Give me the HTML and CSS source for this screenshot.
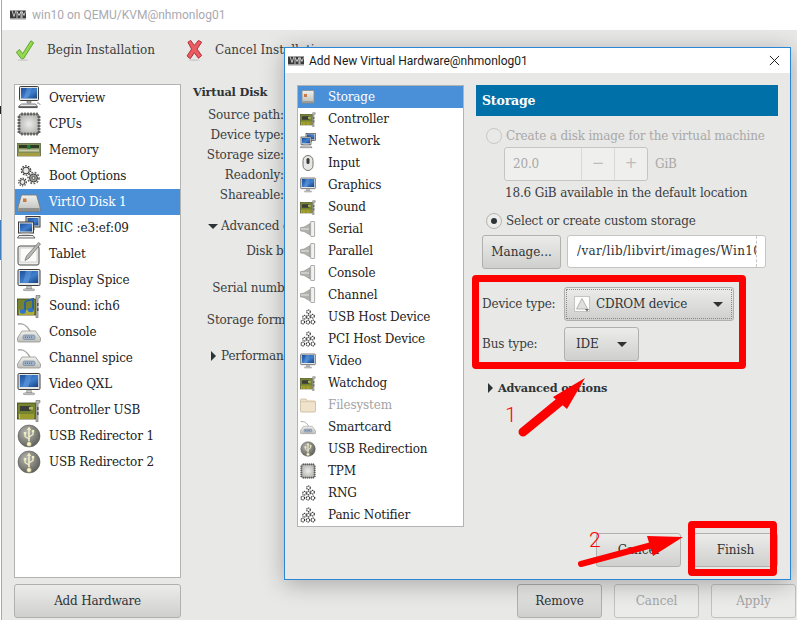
FILE: index.html
```html
<!DOCTYPE html>
<html lang="en">
<head>
<meta charset="utf-8">
<title>win10 on QEMU/KVM@nhmonlog01</title>
<link rel="stylesheet" href="styles.css">
</head>
<body>
<svg class="defs" width="0" height="0" aria-hidden="true">
  <defs>
    <linearGradient id="gScreen" x1="0" y1="0" x2="1" y2="1"><stop offset="0" stop-color="#1d4f9c"/><stop offset=".55" stop-color="#3f7fcf"/><stop offset="1" stop-color="#16427f"/></linearGradient>
    <linearGradient id="gDisk" x1="0" y1="0" x2="0" y2="1"><stop offset="0" stop-color="#f0f0ee"/><stop offset="1" stop-color="#bdbdb9"/></linearGradient>
    <radialGradient id="gBall" cx=".4" cy=".35" r=".75"><stop offset="0" stop-color="#b9b9b5"/><stop offset="1" stop-color="#55554f"/></radialGradient>
    <radialGradient id="gChip" cx=".5" cy=".5" r=".7"><stop offset="0" stop-color="#ececea"/><stop offset="1" stop-color="#a5a5a2"/></radialGradient>
    <symbol id="i-monitor" viewBox="0 0 24 24">
      <rect x="1" y="1.500" width="22" height="16" rx="1.200" fill="#e6e6e4" stroke="#3c3c3c"/>
      <rect x="2.800" y="3" width="18.400" height="12" fill="url(#gScreen)"/>
      <path d="M9 3h6l-4 12H6z" fill="#6fa3e0" opacity=".45"/>
      <path d="M10 18h4l.8 3h-5.600z" fill="#c9c9c6" stroke="#777" stroke-width=".5"/>
      <rect x="6.500" y="21" width="11" height="1.600" rx=".6" fill="#d8d8d5" stroke="#666" stroke-width=".5"/>
    </symbol>
    <symbol id="i-overview" viewBox="0 0 24 24">
      <rect x="2.500" y="0.500" width="19" height="14" rx="1" fill="#e6e6e4" stroke="#3c3c3c"/>
      <rect x="4" y="2" width="16" height="10.500" fill="url(#gScreen)"/>
      <path d="M10 2h5l-4 10.500H6.500z" fill="#6fa3e0" opacity=".45"/>
      <path d="M10 15h4v2h-4z" fill="#bbb" stroke="#555" stroke-width=".5"/>
      <path d="M4.500 18h14l2 2.500H1.500z" fill="#e9e9e7" stroke="#444" stroke-width=".7"/>
      <path d="M1.500 21.500h19" stroke="#555" stroke-width="1.200"/>
      <path d="M20 17c2.500 0 3 1 3 2" stroke="#888" fill="none"/>
    </symbol>
    <symbol id="i-chip" viewBox="0 0 24 24">
      <rect x="2" y="2" width="20" height="20" rx="2" fill="url(#gChip)" stroke="#6a6a68"/>
      <path d="M5 .5v3M8 .5v3M11 .5v3M14 .5v3M17 .5v3M20 .5v3M5 20.500v3M8 20.500v3M11 20.500v3M14 20.500v3M17 20.500v3M20 20.500v3M.5 5h3M.5 8h3M.5 11h3M.5 14h3M.5 17h3M.5 20h3M20.500 5h3M20.500 8h3M20.500 11h3M20.500 14h3M20.500 17h3M20.500 20h3" stroke="#4a4a48" stroke-width="1.300"/>
    </symbol>
    <symbol id="i-memory" viewBox="0 0 24 24">
      <rect x="0.500" y="5.500" width="23" height="12.500" fill="#7f8f55" stroke="#4e5a34" stroke-width=".7"/>
      <rect x="2" y="7" width="20" height="3" fill="#2f3a24"/>
      <rect x="10" y="7" width="3.500" height="4" fill="#1f7f3a"/>
      <rect x="2" y="11.500" width="20" height="2" fill="#c9ccb0"/>
      <path d="M1.500 15h21v3h-21z" fill="#c6b94e"/>
      <path d="M3 15v3M5 15v3M7 15v3M9 15v3M11 15v3M13 15v3M15 15v3M17 15v3M19 15v3M21 15v3" stroke="#6c6a2a" stroke-width=".7"/>
    </symbol>
    <symbol id="i-gears" viewBox="0 0 24 24">
      <g fill="none" stroke="#3f3f3d">
        <circle cx="9" cy="6.500" r="3.200" stroke-width="1.100" fill="#e9e9e7"/>
        <circle cx="9" cy="6.500" r="4.700" stroke-width="1.300" stroke-dasharray="1.600 1.350"/>
        <circle cx="5.500" cy="18" r="2.500" stroke-width="1" fill="#e9e9e7"/>
        <circle cx="5.500" cy="18" r="3.800" stroke-width="1.200" stroke-dasharray="1.400 1.100"/>
        <circle cx="16.500" cy="14" r="4" stroke-width="1" fill="#9d9d9a"/>
        <circle cx="16.500" cy="14" r="5.500" stroke-width="1.700" stroke-dasharray="1.800 1.500" stroke="#666"/>
        <circle cx="16.500" cy="14" r="1.500" fill="#e9e9e7" stroke-width=".8"/>
      </g>
    </symbol>
    <symbol id="i-disk" viewBox="0 0 24 24">
      <path d="M4.500 5h15l3.500 12v3.500a1 1 0 0 1-1 1H2a1 1 0 0 1-1-1V17z" fill="url(#gDisk)" stroke="#77766f" stroke-width=".8"/>
      <rect x="1.500" y="18" width="21" height="3" fill="#8f8f8b"/>
      <rect x="6" y="8.500" width="3.500" height="3.500" fill="#c77a43"/>
    </symbol>
    <symbol id="i-storage" viewBox="0 0 16 16">
      <rect x="2" y="1.500" width="12" height="12.500" rx="1" fill="url(#gDisk)" stroke="#8a8a86" stroke-width=".8"/>
      <rect x="2.400" y="12" width="11.200" height="2" fill="#9a9a96"/>
      <rect x="4" y="5" width="3" height="3" fill="#c77a43"/>
    </symbol>
    <symbol id="i-nic" viewBox="0 0 24 24">
      <rect x="9" y="0.500" width="14" height="10.500" fill="#d9d9d6" stroke="#3c3c3c"/>
      <rect x="10.500" y="2" width="11" height="7.500" fill="url(#gScreen)"/>
      <path d="M13 11v2h5" stroke="#555" fill="none"/>
      <rect x="1.500" y="6" width="15" height="11" fill="#e2e2df" stroke="#3c3c3c"/>
      <rect x="3" y="7.500" width="12" height="8" fill="url(#gScreen)"/>
      <path d="M5 17h8v1.500H5z" fill="#bbb"/>
      <path d="M2 19.500h14l2 2.500H0.500z" fill="#eee" stroke="#444" stroke-width=".8"/>
    </symbol>
    <symbol id="i-tablet" viewBox="0 0 24 24">
      <rect x="1" y="4" width="21" height="19" rx="2" fill="#efefed" stroke="#4d4d4b"/>
      <rect x="3" y="6" width="17" height="14" fill="#fafaf9" stroke="#bbb" stroke-width=".6"/>
      <path d="M21.500.5 23.500 2 12 16l-4 2.500L9.500 14z" fill="#b9b9b6" stroke="#666" stroke-width=".7"/>
    </symbol>
    <symbol id="i-card" viewBox="0 0 24 24">
      <rect x="0.500" y="5" width="18" height="16" fill="#77842f" stroke="#3f4718" stroke-width=".8"/>
      <rect x="3" y="8" width="10.500" height="5" rx=".6" fill="#3b3d3a"/>
      <rect x="12" y="9" width="4" height="2.500" fill="#b4bc63"/>
      <path d="M2 16h15v5H2z" fill="#c9c23a"/>
      <path d="M4 16v5M6 16v5M8 16v5M10 16v5M12 16v5M14 16v5M16 16v5" stroke="#58611f" stroke-width=".8"/>
      <path d="M19 2.500h4v2l-2 1V24h-2z" fill="#b9b9b5" stroke="#666" stroke-width=".6"/>
      <rect x="20" y="9" width="1.500" height="3" fill="#555"/><rect x="20" y="14" width="1.500" height="3" fill="#555"/>
    </symbol>
    <symbol id="i-sound" viewBox="0 0 24 24">
      <rect x="0.500" y="5" width="18" height="16" fill="#77842f" stroke="#3f4718" stroke-width=".8"/>
      <path d="M2 16h15v5H2z" fill="#c9c23a" opacity=".7"/>
      <path d="M8 7.500 16 5v11" stroke="#1e5fb5" stroke-width="1.800" fill="none"/>
      <path d="M8 7.500V17" stroke="#1e5fb5" stroke-width="1.800"/>
      <ellipse cx="5.800" cy="17.500" rx="3" ry="2.200" fill="#2f74c8"/>
      <ellipse cx="13.800" cy="16" rx="3" ry="2.200" fill="#2f74c8"/>
      <path d="M19 1.500h4v2l-2 1V24h-2z" fill="#b9b9b5" stroke="#666" stroke-width=".6"/>
      <rect x="20" y="9" width="1.500" height="3" fill="#555"/><rect x="20" y="14" width="1.500" height="3" fill="#555"/>
    </symbol>
    <symbol id="i-console" viewBox="0 0 24 24">
      <path d="M1 4c6-1 9 2 12 7" fill="none" stroke="#a9a9a6" stroke-width="1.500"/>
      <path d="M5 11h13.500l5 7v2.500a1.500 1.500 0 0 1-1.500 1.500H2a1.500 1.500 0 0 1-1.500-1.500V18z" fill="url(#gDisk)" stroke="#96968f" stroke-width=".8"/>
      <rect x="6" y="15" width="12" height="4.500" rx="1.500" fill="#9db0c4" stroke="#6f7f90" stroke-width=".6"/>
      <path d="M8 17.200h8" stroke="#56616e" stroke-width="1" stroke-dasharray="1 1"/>
    </symbol>
    <symbol id="i-usb" viewBox="0 0 24 24">
      <circle cx="12" cy="12" r="11" fill="url(#gBall)" stroke="#5a5a56" stroke-width=".6"/>
      <path d="M12 2.500 9.800 6h1.400v12h1.600V6h1.400z" fill="#f1eec4"/>
      <path d="M12 15 8 12.500V10M12 13l4-2.500V8" stroke="#f1eec4" stroke-width="1.300" fill="none"/>
      <rect x="6.800" y="8" width="2.400" height="2.400" fill="#f1eec4"/>
      <rect x="14.800" y="6" width="2.400" height="2.400" fill="#f1eec4"/>
      <circle cx="12" cy="20" r="2.500" fill="#f6f3c9" stroke="#6a6a56" stroke-width=".6"/>
    </symbol>
    <symbol id="i-cone" viewBox="0 0 16 16">
      <path d="M.5 6.500 4 6l6-3.500v11.500L4 10.500.5 10z" fill="#b0b0ac" stroke="#85857f" stroke-width=".5"/>
      <rect x="10.600" y="0.500" width="4" height="15" rx=".5" fill="#f1f1ef" stroke="#8d8d89" stroke-width=".7"/>
      <path d="M1 8h8" stroke="#e6e6e4"/>
    </symbol>
    <symbol id="i-mouse" viewBox="0 0 16 16">
      <rect x="3" y="0.500" width="10" height="15" rx="5" fill="#e7e7e5" stroke="#77776f"/>
      <rect x="6.500" y="3" width="3" height="6" rx="1.500" fill="#3a3a38"/>
    </symbol>
    <symbol id="i-folder" viewBox="0 0 16 16">
      <path d="M.5 3a1 1 0 0 1 1-1H6l1.500 2h7a1 1 0 0 1 1 1v9a1 1 0 0 1-1 1h-13a1 1 0 0 1-1-1z" fill="#efe3cc" stroke="#c8b99b" stroke-width=".8"/>
      <path d="M1 4.700h14" stroke="#d9c9a9"/>
    </symbol>
    <symbol id="i-hostgear" viewBox="0 0 16 16">
      <g fill="#fff" stroke="#333" stroke-width="1.200">
        <circle cx="8.500" cy="2.800" r="1.800" stroke-dasharray="1.200 .6"/>
        <circle cx="12.500" cy="7.200" r="1.800" stroke-dasharray="1.200 .6"/>
        <circle cx="4.500" cy="8.200" r="1.800" stroke-dasharray="1.200 .6"/>
        <circle cx="8.500" cy="8" r="1.800" stroke-dasharray="1.200 .6"/>
        <circle cx="2.800" cy="13" r="1.800" stroke-dasharray="1.200 .6"/>
        <circle cx="8" cy="13.200" r="1.800" stroke-dasharray="1.200 .6"/>
        <circle cx="13" cy="13" r="1.800" stroke-dasharray="1.200 .6"/>
      </g>
    </symbol>
    <symbol id="i-vmm" viewBox="0 0 16 9">
      <path d="M0 0h16v8H0z" fill="#3a3a3a"/>
      <path d="M2 0 4 6 6 0M7 8V1l2 4 2-4v7M12 8V1l2 4 1.500-4" fill="none" stroke="#e8e8e8" stroke-width=".8"/>
      <path d="M0 8h16v1H0z" fill="#9a9a9a"/>
    </symbol>
  </defs>
</svg>

<span class="edge-mark edge-mark-black"></span>
<span class="edge-mark edge-mark-blue"></span>

<main class="window">
  <header class="titlebar">
    <svg class="title-logo"><use href="#i-vmm"/></svg>
    <span class="title-text">win10 on QEMU/KVM@nhmonlog01</span>
  </header>

  <div class="toolbar">
    <div class="tool tool-begin">
      <svg class="tool-icon" viewBox="0 0 22 24">
        <path d="M2 14.500 5.500 11.500 9 16 18 2 21 4 10 21.500H7.500z" fill="#93d94d" stroke="#5d9c2c" stroke-linejoin="round"/>
        <ellipse cx="9" cy="23" rx="6" ry="1" fill="#ccc"/>
      </svg>
      <span>Begin Installation</span>
    </div>
    <div class="tool">
      <svg class="tool-icon" viewBox="-2 0 22 24">
        <path d="M4 3.500 7 1.500 11 7 15.500 1.500 19 3.500 14 11 19 18 15.500 21 11 15 6.500 21.500 3 18.500 8 11z" fill="#ea5b62" stroke="#a92a30" stroke-linejoin="round"/>
        <ellipse cx="11" cy="23" rx="6" ry="1" fill="#ccc"/>
      </svg>
      <span>Cancel Installation</span>
    </div>
  </div>

  <div class="content">
    <ul class="list list-main">
      <li class="row"><svg class="icon"><use href="#i-overview"/></svg>Overview</li>
      <li class="row"><svg class="icon"><use href="#i-chip"/></svg>CPUs</li>
      <li class="row"><svg class="icon"><use href="#i-memory"/></svg>Memory</li>
      <li class="row"><svg class="icon"><use href="#i-gears"/></svg>Boot Options</li>
      <li class="row row-selected"><svg class="icon"><use href="#i-disk"/></svg>VirtIO Disk 1</li>
      <li class="row"><svg class="icon"><use href="#i-nic"/></svg>NIC :e3:ef:09</li>
      <li class="row"><svg class="icon"><use href="#i-tablet"/></svg>Tablet</li>
      <li class="row"><svg class="icon"><use href="#i-monitor"/></svg>Display Spice</li>
      <li class="row"><svg class="icon"><use href="#i-sound"/></svg>Sound: ich6</li>
      <li class="row"><svg class="icon"><use href="#i-console"/></svg>Console</li>
      <li class="row"><svg class="icon"><use href="#i-console"/></svg>Channel spice</li>
      <li class="row"><svg class="icon"><use href="#i-monitor"/></svg>Video QXL</li>
      <li class="row"><svg class="icon"><use href="#i-card"/></svg>Controller USB</li>
      <li class="row"><svg class="icon"><use href="#i-usb"/></svg>USB Redirector 1</li>
      <li class="row"><svg class="icon"><use href="#i-usb"/></svg>USB Redirector 2</li>
    </ul>

    <section class="details">
      <h2 class="details-title">Virtual Disk</h2>
      <div class="props">
        <div class="prop">Source path:</div>
        <div class="prop">Device type:</div>
        <div class="prop">Storage size:</div>
        <div class="prop">Readonly:</div>
        <div class="prop">Shareable:</div>
      </div>
      <div class="expander expander-open"><span class="tri-down"></span>Advanced options</div>
      <div class="adv adv-bus">Disk bus:</div>
      <div class="adv adv-serial">Serial number:</div>
      <div class="adv adv-format">Storage format:</div>
      <div class="expander expander-perf"><span class="tri-right"></span>Performance options</div>
    </section>
  </div>

  <footer class="bottom">
    <button class="btn btn-add">Add Hardware</button>
    <div class="bottom-actions">
      <button class="btn btn-85">Remove</button>
      <button class="btn btn-85 btn-disabled">Cancel</button>
      <button class="btn btn-85 btn-disabled">Apply</button>
    </div>
  </footer>
</main>

<div class="dialog">
  <header class="dialog-title">
    <svg class="title-logo"><use href="#i-vmm"/></svg>
    <span class="dialog-title-text">Add New Virtual Hardware@nhmonlog01</span>
    <svg class="close" viewBox="0 0 12 12"><path d="M1 1l10 10M11 1 1 11" stroke="#111" fill="none"/></svg>
  </header>
  <div class="dialog-body">
    <div class="dialog-main">
      <ul class="list list-dialog">
        <li class="row-s row-selected"><svg class="icon-s"><use href="#i-storage"/></svg>Storage</li>
        <li class="row-s"><svg class="icon-s"><use href="#i-card"/></svg>Controller</li>
        <li class="row-s"><svg class="icon-s"><use href="#i-nic"/></svg>Network</li>
        <li class="row-s"><svg class="icon-s"><use href="#i-mouse"/></svg>Input</li>
        <li class="row-s"><svg class="icon-s"><use href="#i-monitor"/></svg>Graphics</li>
        <li class="row-s"><svg class="icon-s"><use href="#i-card"/></svg>Sound</li>
        <li class="row-s"><svg class="icon-s"><use href="#i-cone"/></svg>Serial</li>
        <li class="row-s"><svg class="icon-s"><use href="#i-cone"/></svg>Parallel</li>
        <li class="row-s"><svg class="icon-s"><use href="#i-cone"/></svg>Console</li>
        <li class="row-s"><svg class="icon-s"><use href="#i-cone"/></svg>Channel</li>
        <li class="row-s"><svg class="icon-s"><use href="#i-hostgear"/></svg>USB Host Device</li>
        <li class="row-s"><svg class="icon-s"><use href="#i-hostgear"/></svg>PCI Host Device</li>
        <li class="row-s"><svg class="icon-s"><use href="#i-monitor"/></svg>Video</li>
        <li class="row-s"><svg class="icon-s"><use href="#i-card"/></svg>Watchdog</li>
        <li class="row-s row-muted"><svg class="icon-s"><use href="#i-folder"/></svg>Filesystem</li>
        <li class="row-s"><svg class="icon-s"><use href="#i-console"/></svg>Smartcard</li>
        <li class="row-s"><svg class="icon-s"><use href="#i-usb"/></svg>USB Redirection</li>
        <li class="row-s"><svg class="icon-s"><use href="#i-chip"/></svg>TPM</li>
        <li class="row-s"><svg class="icon-s"><use href="#i-hostgear"/></svg>RNG</li>
        <li class="row-s"><svg class="icon-s"><use href="#i-hostgear"/></svg>Panic Notifier</li>
      </ul>

      <section class="form">
        <h2 class="form-header">Storage</h2>
        <label class="radio-row radio-row-disabled"><span class="radio radio-off"></span>Create a disk image for the virtual machine</label>
        <div class="size-row">
          <div class="spin">
            <span class="spin-value">20.0</span>
            <span class="spin-btn">&minus;</span>
            <span class="spin-btn">+</span>
          </div>
          <span class="size-unit">GiB</span>
        </div>
        <div class="size-info">18.6 GiB available in the default location</div>
        <label class="radio-row radio-row-second"><span class="radio radio-on"></span>Select or create custom storage</label>
        <div class="path-row">
          <button class="btn btn-manage">Manage...</button>
          <div class="path-entry"><span class="path-text">/var/lib/libvirt/images/Win10.iso</span></div>
        </div>
        <div class="field field-device">
          <span class="field-label">Device type:</span>
          <div class="combo combo-device">
            <svg class="combo-icon" viewBox="0 0 16 16">
              <rect x="0.500" y="0.500" width="15" height="15" fill="#fdfdfc" stroke="#c4c4c0"/>
              <path d="M8 2.500 13.500 13h-11z" fill="#dfdfdc" stroke="#b5b5b0"/>
              <path d="M11 13h4l-2 2.500z" fill="#666"/>
            </svg>
            <span class="combo-text">CDROM device</span>
            <span class="caret"></span>
          </div>
        </div>
        <div class="field">
          <span class="field-label">Bus type:</span>
          <div class="combo combo-bus">
            <span class="combo-text">IDE</span>
            <span class="caret"></span>
          </div>
        </div>
        <div class="form-expander"><span class="tri-right"></span>Advanced options</div>
      </section>
    </div>
    <div class="dialog-actions">
      <button class="btn btn-85">Cancel</button>
      <button class="btn btn-85">Finish</button>
    </div>
  </div>
</div>

<div class="mark-box mark-box-fields"></div>
<div class="mark-box mark-box-finish"></div>
<svg class="arrows" viewBox="0 0 797 620">
  <path d="M523 432 562 400" stroke="#f00" stroke-width="9" stroke-linecap="round" fill="none"/>
  <path d="M585 378 553 397 567 409z" fill="#f00"/>
  <path d="M581 564 652 545" stroke="#f00" stroke-width="6" stroke-linecap="round" fill="none"/>
  <path d="M683 537 647 536 653 556z" fill="#f00"/>
</svg>
<span class="mark-num mark-num-1">1</span>
<span class="mark-num mark-num-2">2</span>
</body>
</html>
```

FILE: styles.css
```css
* { box-sizing: border-box; }

html, body {
  margin: 0;
  padding: 0;
  width: 797px;
  height: 620px;
  overflow: hidden;
  background: #fff;
}

body {
  font-family: "DejaVu Serif", serif;
  font-size: 12px;
  letter-spacing: -0.16px;
  color: #2e3436;
  position: relative;
}

.defs { position: absolute; }

ul { list-style: none; margin: 0; padding: 0; }
h2 { margin: 0; font-size: 11.300px; }

.edge-mark { position: absolute; left: 0; width: 1px; }
.edge-mark-black { top: 106px; height: 8px; background: #222; }
.edge-mark-blue { top: 220px; height: 40px; background: #3f7fbf; }

.window {
  margin-left: 1px;
  width: 796px;
  height: 620px;
  border-left: 1px solid #a9a9a7;
  background: #e8e8e7;
  display: flex;
  flex-direction: column;
}

.titlebar {
  height: 30px;
  background: #fff;
  display: flex;
  align-items: center;
  padding-left: 8px;
}

.title-logo { width: 16px; height: 10px; flex: none; }

.title-text {
  margin-left: 6px;
  font: 12px Roboto, sans-serif;
  letter-spacing: 0;
  color: #a9a9b0;
}

.toolbar {
  height: 54px;
  display: flex;
  align-items: center;
  padding-left: 12px;
  padding-bottom: 14px;
  letter-spacing: 0;
  color: #3a3e40;
}

.tool { display: flex; align-items: center; gap: 12px; }
.tool-begin { width: 168px; }
.tool-icon { width: 21px; height: 22px; flex: none; }

.content {
  flex: none;
  height: 494px;
  display: flex;
  padding-left: 12px;
  gap: 12px;
}

.list {
  background: #fff;
  border: 1px solid #b3b3b1;
  color: #222;
}

.list-main { width: 167px; height: 494px; }

.row {
  height: 26px;
  display: flex;
  align-items: center;
  gap: 8px;
  padding-left: 2px;
}

.icon { width: 24px; height: 24px; flex: none; }

.row-selected { background: #4a90d9; color: #fff; }

.details { flex: 1; min-width: 0; }

.details-title {
  height: 16px;
  line-height: 16px;
  font-weight: 700;
  color: #2e3436;
}

.props { margin-top: 5px; width: 91px; white-space: nowrap; }

.prop {
  height: 20px;
  line-height: 20px;
  display: flex;
  justify-content: flex-end;
  color: #3a3e40;
}

.expander {
  height: 20px;
  line-height: 20px;
  padding-left: 28px;
  position: relative;
  white-space: nowrap;
  color: #3a3e40;
}

.expander-open { margin-top: 11px; }
.expander-perf { margin-top: 16px; }

.tri-down, .tri-right { position: absolute; width: 0; height: 0; }

.tri-down {
  left: 15px;
  top: 8px;
  border-left: 5px solid transparent;
  border-right: 5px solid transparent;
  border-top: 5px solid #2e3436;
}

.tri-right {
  left: 18px;
  top: 5px;
  border-top: 5px solid transparent;
  border-bottom: 5px solid transparent;
  border-left: 5px solid #2e3436;
}

.adv {
  height: 20px;
  line-height: 20px;
  width: 108px;
  display: flex;
  justify-content: flex-end;
  white-space: nowrap;
  color: #3a3e40;
}

.adv-bus { margin-top: 5px; }
.adv-serial { margin-top: 17px; }
.adv-format { margin-top: 12px; }

.bottom {
  flex: none;
  display: flex;
  justify-content: space-between;
  padding: 6px 1px 2px 12px;
  height: 42px;
}

.btn {
  font-family: inherit;
  font-size: 12px;
  color: #2e3436;
  height: 34px;
  padding: 0;
  border: 1px solid #b0b0ae;
  border-radius: 3px;
  background: linear-gradient(#ececeb, #cfcfcd);
}

.btn-add { width: 167px; letter-spacing: -0.2px; }
.btn-85 { width: 85px; }
.btn-disabled { background: #ebebea; border-color: #c2c2c0; color: #a5a5a5; }

.bottom-actions { display: flex; gap: 12px; }

.dialog {
  position: absolute;
  left: 284px;
  top: 47px;
  width: 507px;
  height: 533px;
  border: 1px solid #2b86d6;
  background: #e8e8e7;
  box-shadow: 0 4px 22px rgba(0, 0, 0, 0.28);
  display: flex;
  flex-direction: column;
}

.dialog-title {
  height: 25px;
  flex: none;
  background: #fff;
  display: flex;
  align-items: center;
  padding: 0 10px 0 3px;
}

.dialog-title-text {
  margin-left: 5px;
  font: 12px Roboto, sans-serif;
  letter-spacing: 0;
  color: #1a1a1a;
}

.close { width: 11px; height: 11px; margin-left: auto; }

.dialog-body {
  flex: 1;
  padding: 12px;
  display: flex;
  flex-direction: column;
  gap: 6px;
}

.dialog-main { display: flex; gap: 12px; height: 442px; flex: none; }

.list-dialog { width: 167px; height: 442px; }

.row-s {
  height: 22px;
  display: flex;
  align-items: center;
  gap: 12px;
  padding-left: 2px;
}

.icon-s { width: 16px; height: 16px; flex: none; }

.row-muted { color: #a3a3a3; }

.form { flex: 1; min-width: 0; }

.form-header {
  height: 31px;
  line-height: 32px;
  padding-left: 6px;
  background: #0071a8;
  color: #fff;
  font-size: 12.500px;
  font-weight: 700;
}

.radio-row {
  height: 20px;
  display: flex;
  align-items: center;
  gap: 4px;
  padding-left: 10px;
  margin-top: 10px;
  white-space: nowrap;
  color: #3a3e40;
}

.radio-row-disabled { color: #a8a8a8; }
.radio-row-second { margin-top: 8px; }

.radio {
  width: 16px;
  height: 16px;
  border-radius: 50%;
  border: 1px solid #b3b3b1;
  background: #ececeb;
  flex: none;
  display: flex;
  align-items: center;
  justify-content: center;
}

.radio-off { border-color: #c8c8c6; background: #e9e9e8; }

.radio-on::after {
  content: "";
  width: 6px;
  height: 6px;
  border-radius: 50%;
  background: #2e3436;
}

.size-row {
  margin: 1px 0 0 28px;
  display: flex;
  align-items: center;
  gap: 7px;
  color: #a8a8a8;
}

.spin {
  width: 144px;
  height: 34px;
  display: flex;
  background: #efefee;
  border: 1px solid #c5c5c3;
  border-radius: 3px;
}

.spin-value { width: 76px; line-height: 32px; padding-left: 8px; }

.spin-btn {
  width: 33px;
  border-left: 1px solid #d8d8d6;
  text-align: center;
  line-height: 31px;
  font-family: "DejaVu Sans", sans-serif;
  font-size: 15px;
  color: #bdbdbb;
}

.size-info {
  height: 20px;
  line-height: 20px;
  margin: 2px 0 0 29px;
  white-space: nowrap;
  color: #3a3e40;
}

.path-row { display: flex; gap: 6px; margin: 4px 0 0 6px; }

.btn-manage { width: 79px; }

.path-entry {
  width: 199px;
  height: 33px;
  padding-left: 9px;
  background: #fff;
  border: 1px solid #c5c5c3;
  border-radius: 3px;
  line-height: 31px;
  letter-spacing: 0.35px;
  color: #2e3436;
}

.path-text {
  display: block;
  width: 180px;
  overflow: hidden;
  white-space: nowrap;
  border-right: 1px dashed #c8c8c8;
}

.field {
  display: flex;
  align-items: center;
  margin: 6px 0 0 6px;
  color: #3a3e40;
}

.field-device { margin-top: 18px; }

.field-label { width: 82px; flex: none; white-space: nowrap; }

.combo {
  height: 34px;
  display: flex;
  align-items: center;
  border: 1px solid #b0b0ae;
  border-radius: 3px;
  background: linear-gradient(#ececeb, #cfcfcd);
  color: #2e3436;
}

.combo-device { width: 170px; padding: 0 10px 0 9px; outline: 1px dotted #8a8a88; outline-offset: -3px; }
.combo-bus { width: 75px; padding: 0 11px; }

.combo-icon { width: 16px; height: 16px; flex: none; margin-right: 6px; }

.caret {
  margin-left: auto;
  width: 0;
  height: 0;
  border-left: 5px solid transparent;
  border-right: 5px solid transparent;
  border-top: 5px solid #2e3436;
}

.form-expander {
  height: 20px;
  line-height: 20px;
  margin-top: 17px;
  padding-left: 22px;
  font-size: 11.300px;
  font-weight: 700;
  position: relative;
  white-space: nowrap;
  color: #2e3436;
}

.form-expander .tri-right { left: 12px; }

.dialog-actions { display: flex; justify-content: flex-end; gap: 12px; }

.mark-box {
  position: absolute;
  border: 7px solid #f00;
  border-radius: 4px;
}

.mark-box-fields { left: 472px; top: 275px; width: 274px; height: 94px; }
.mark-box-finish { left: 688px; top: 521px; width: 89px; height: 55px; }

.arrows { position: absolute; left: 0; top: 0; width: 797px; height: 620px; pointer-events: none; }

.mark-num {
  position: absolute;
  font: 300 21px Roboto, sans-serif;
  letter-spacing: 0;
  color: #f00;
}

.mark-num-1 { left: 505px; top: 403px; }
.mark-num-2 { left: 589px; top: 528px; }
```
